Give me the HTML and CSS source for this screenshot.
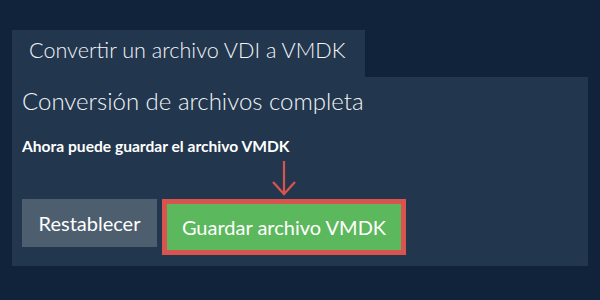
FILE: index.html
```html
<!DOCTYPE html>
<html lang="es">
<head>
<meta charset="utf-8">
<link rel="stylesheet" href="styles.css">
</head>
<body>
<div class="wrap">
  <div class="tab">Convertir un archivo VDI a VMDK</div>
  <div class="panel">
    <h2 class="title">Conversión de archivos completa</h2>
    <p class="note">Ahora puede guardar el archivo VMDK</p>
    <div class="actions">
      <button class="btn reset">Restablecer</button>
      <div class="save-wrap">
        <svg class="arrow" width="30" height="36" viewBox="0 0 30 36">
          <path d="M15 1 V34 M4 22 L15 34 L26 22" fill="none" stroke="#d9534f" stroke-width="2.2"/>
        </svg>
        <button class="btn save">Guardar archivo VMDK</button>
      </div>
    </div>
  </div>
</div>
</body>
</html>
```

FILE: styles.css
```css
html, body {
  margin: 0;
  padding: 0;
  background: #10233a;
  font-family: Lato, "Open Sans", sans-serif;
  color: #fff;
}
.wrap {
  padding: 30px 12px 0 12px;
}
.tab {
  width: 353px;
  height: 47px;
  box-sizing: border-box;
  padding-left: 17px;
  background: #22374e;
  font-size: 21.6px;
  font-weight: 300;
  line-height: 41px;
  color: #f2f4f6;
  white-space: nowrap;
}
.panel {
  background: #22374e;
  height: 189px;
  box-sizing: border-box;
  padding: 10px 10px 0 10px;
}
.title {
  margin: 0;
  font-size: 24px;
  font-weight: 300;
  line-height: 28px;
  color: #f2f4f6;
}
.note {
  margin: 22px 0 0 0;
  font-size: 15.6px;
  font-weight: 700;
  line-height: 18px;
}
.actions {
  display: flex;
  align-items: flex-start;
  gap: 5px;
  margin-top: 5px;
}
.btn {
  border: none;
  font-family: Lato, "Open Sans", sans-serif;
  font-size: 20px;
  font-weight: 400;
  color: #fff;
  padding: 0;
  margin: 0;
}
.reset {
  margin-top: 39px;
  width: 135px;
  height: 48px;
  background: #4d5e6f;
}
.save-wrap {
  display: flex;
  flex-direction: column;
  align-items: center;
}
.arrow {
  display: block;
  margin-bottom: 3px;
}
.save {
  width: 244px;
  height: 56px;
  background: #5cb85c;
  border: 5px solid #d9534f;
  box-sizing: border-box;
}
```
